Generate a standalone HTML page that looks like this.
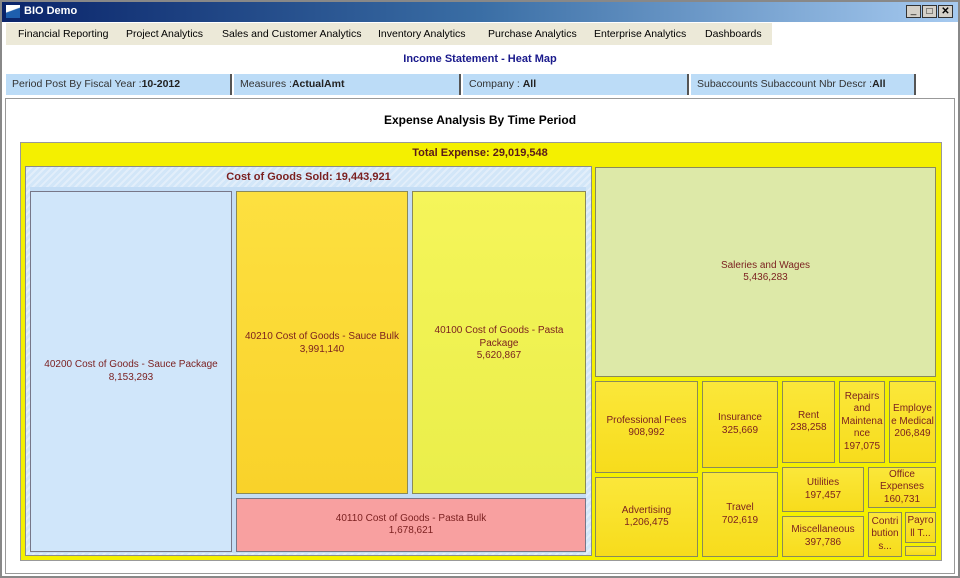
<!DOCTYPE html>
<html><head><meta charset="utf-8"><style>
*{margin:0;padding:0;box-sizing:border-box}
body{width:960px;height:578px;position:relative;background:#d4d0c8;font-family:"Liberation Sans",sans-serif;overflow:hidden}
.a{position:absolute}
.t{position:absolute;display:flex;align-items:center;justify-content:center;text-align:center;font-size:10px;color:#7a1f1f;line-height:12.5px;border:1px solid #8a8a5a;overflow:hidden}
.y{background:linear-gradient(#fbe73a,#f7dc1c)}
.m{font-size:10.5px;color:#000}
.f{position:absolute;top:74px;height:21px;background:#bcdcf7;border-right:2px solid #555;font-size:10.5px;color:#333;padding:4px 0 0 6px}
.f b{color:#222}
</style></head><body>
<div class="a" style="left:0;top:0;width:960px;height:578px;border:2px solid #888;background:#fff"></div>
<div class="a" style="left:2px;top:2px;width:956px;height:20px;background:linear-gradient(90deg,#0a246a,#3a6ea5 50%,#a6caf0)"></div>
<div class="a" style="left:6px;top:5px;width:14px;height:13px;background:linear-gradient(160deg,#fff 40%,#1e5fae 45%)"></div>
<div class="a" style="left:24px;top:5px;color:#fff;font-weight:bold;font-size:11px">BIO Demo</div>
<div class="a" style="left:906px;top:5px;display:flex;gap:1px">
<div style="width:15px;height:13px;background:#d4d0c8;border:1px solid #333;font-size:10px;line-height:10px;text-align:center">_</div>
<div style="width:15px;height:13px;background:#d4d0c8;border:1px solid #333;font-size:10px;line-height:11px;text-align:center">□</div>
<div style="width:15px;height:13px;background:#d4d0c8;border:1px solid #333;font-size:10px;line-height:11px;text-align:center;font-weight:bold">✕</div></div>
<div class="a" style="left:6px;top:23px;width:766px;height:22px;background:#ece9d8"></div>
<div class="a m" style="left:18px;top:28px">Financial Reporting</div>
<div class="a m" style="left:126px;top:28px">Project Analytics</div>
<div class="a m" style="left:222px;top:28px">Sales and Customer Analytics</div>
<div class="a m" style="left:378px;top:28px">Inventory Analytics</div>
<div class="a m" style="left:488px;top:28px">Purchase Analytics</div>
<div class="a m" style="left:594px;top:28px">Enterprise Analytics</div>
<div class="a m" style="left:705px;top:28px">Dashboards</div>
<div class="a" style="left:0;top:53px;width:960px;text-align:center;font-size:11px;font-weight:bold;color:#1a1a8c">Income Statement - Heat Map</div>
<div class="f" style="left:6px;width:226px">Period Post By Fiscal Year :<b>10-2012</b></div>
<div class="f" style="left:234px;width:227px">Measures :<b>ActualAmt</b></div>
<div class="f" style="left:463px;width:226px">Company : <b>All</b></div>
<div class="f" style="left:691px;width:225px">Subaccounts Subaccount Nbr Descr :<b>All</b></div>
<div class="a" style="left:5px;top:98px;width:950px;height:476px;border:1px solid #999;background:#fff"></div>
<div class="a" style="left:0;top:113px;width:960px;text-align:center;font-size:12px;font-weight:bold">Expense Analysis By Time Period</div>
<div class="a" style="left:20px;top:142px;width:922px;height:419px;background:#f4f000;border:1px solid #999"></div>
<div class="a" style="left:0;top:147px;width:960px;text-align:center;font-size:11px;font-weight:bold;color:#5a1a1a">Total Expense: 29,019,548</div>
<div class="a" style="left:25px;top:166px;width:567px;height:390px;background:repeating-linear-gradient(135deg,#d2e6f8 0 3px,#e2eefa 3px 5px);border:1px solid #8a8a8a"></div>
<div class="a" style="left:25px;top:171px;width:567px;text-align:center;font-size:11px;font-weight:bold;color:#7a1f1f">Cost of Goods Sold: 19,443,921</div>
<div class="a" style="left:30px;top:187px;width:556px;height:366px;background:#c4ddf5"></div>
<div class="t" style="left:30px;top:191px;width:202px;height:361px;background:#d0e6fa;border-color:#778">40200 Cost of Goods - Sauce Package<br>8,153,293</div>
<div class="t" style="left:236px;top:191px;width:172px;height:303px;background:linear-gradient(#fde040,#f9d22a);align-items:flex-start;padding-top:139px">40210 Cost of Goods - Sauce Bulk<br>3,991,140</div>
<div class="t" style="left:412px;top:191px;width:174px;height:303px;background:linear-gradient(#f5f55a,#eaee4a);align-items:flex-start;padding-top:133px">40100 Cost of Goods - Pasta<br>Package<br>5,620,867</div>
<div class="t" style="left:236px;top:498px;width:350px;height:54px;background:#f8a0a0;border-color:#778">40110 Cost of Goods - Pasta Bulk<br>1,678,621</div>
<div class="t" style="left:595px;top:167px;width:341px;height:210px;background:#dde9a8">Saleries and Wages<br>5,436,283</div>
<div class="t y" style="left:595px;top:381px;width:103px;height:92px">Professional Fees<br>908,992</div>
<div class="t y" style="left:595px;top:477px;width:103px;height:80px">Advertising<br>1,206,475</div>
<div class="t y" style="left:702px;top:381px;width:76px;height:87px">Insurance<br>325,669</div>
<div class="t y" style="left:702px;top:472px;width:76px;height:85px">Travel<br>702,619</div>
<div class="t y" style="left:782px;top:381px;width:53px;height:82px">Rent<br>238,258</div>
<div class="t y" style="left:839px;top:381px;width:46px;height:82px">Repairs<br>and<br>Maintena<br>nce<br>197,075</div>
<div class="t y" style="left:889px;top:381px;width:47px;height:82px">Employe<br>e Medical<br>206,849</div>
<div class="t y" style="left:782px;top:467px;width:82px;height:45px">Utilities<br>197,457</div>
<div class="t y" style="left:868px;top:467px;width:68px;height:41px">Office<br>Expenses<br>160,731</div>
<div class="t y" style="left:782px;top:516px;width:82px;height:41px">Miscellaneous<br>397,786</div>
<div class="t y" style="left:868px;top:512px;width:34px;height:45px">Contri<br>bution<br>s...</div>
<div class="t y" style="left:905px;top:512px;width:31px;height:31px">Payro<br>ll T...</div>
<div class="t y" style="left:905px;top:546px;width:31px;height:10px"></div>
</body></html>
